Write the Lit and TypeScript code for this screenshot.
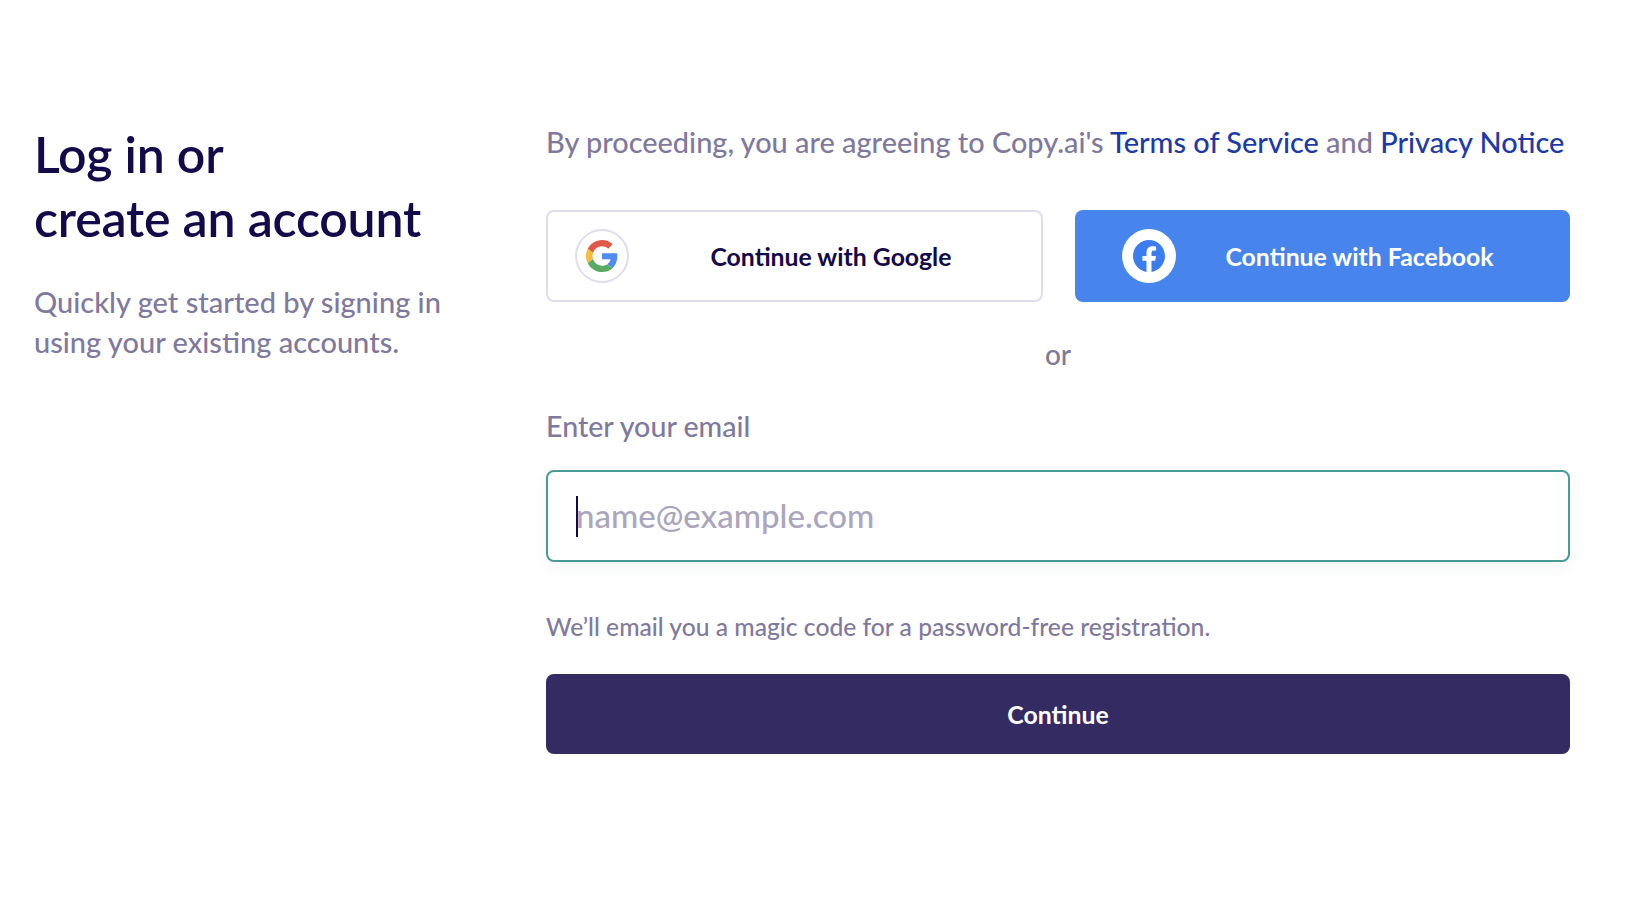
import { LitElement, html, css } from "lit";
import { customElement } from "lit/decorators.js";

@customElement("app-root")
export class AppRoot extends LitElement {
  static styles = css`
    :host {
      display: block;
      width: 1628px;
      height: 920px;
      background: #fff;
      font-family: "Lato", "Inter", sans-serif;
      color: #7f7a9d;
      box-sizing: border-box;
    }
    .page {
      display: grid;
      grid-template-columns: 546px 1024px;
      padding-top: 122px;
    }
    .left { padding-left: 34px; }
    h1 {
      margin: 0;
      font-size: 50px;
      line-height: 64px;
      font-weight: 600;
      letter-spacing: -0.2px;
      color: #130a4a;
    }
    .sub {
      margin: 32px 0 0;
      font-size: 29px;
      line-height: 40px;
      font-weight: 500;
    }
    .right { display: flex; flex-direction: column; }
    .terms {
      margin: 0;
      font-size: 28.9px;
      line-height: 40px;
      font-weight: 500;
      white-space: nowrap;
    }
    .terms a { color: #1e3aa8; text-decoration: none; }
    .socials {
      display: grid;
      grid-template-columns: 497px 495px;
      column-gap: 32px;
      margin-top: 48px;
    }
    .social {
      display: flex;
      align-items: center;
      height: 92px;
      box-sizing: border-box;
      border-radius: 8px;
      font-size: 24.8px;
      font-weight: 700;
    }
    .google { border: 2px solid #dedeeb; color: #130a4a; padding: 0 8px 0 27px; }
    .facebook { background: #4785ed; color: #fff; padding: 0 27px 0 47px; }
    .badge {
      flex: none;
      width: 54px;
      height: 54px;
      border-radius: 50%;
      box-sizing: border-box;
      display: flex;
      align-items: center;
      justify-content: center;
    }
    .google .badge { border: 2px solid #dedeeb; }
    .facebook .badge { background: #fff; }
    .social span { flex: 1; text-align: center; }
    .or {
      text-align: center;
      font-size: 28px;
      line-height: 40px;
      font-weight: 500;
      margin-top: 32px;
    }
    label {
      display: block;
      margin-top: 32px;
      font-size: 28.6px;
      line-height: 40px;
      font-weight: 500;
    }
    .field { position: relative; margin-top: 24px; }
    input {
      display: block;
      width: 100%;
      height: 92px;
      box-sizing: border-box;
      border: 2px solid #4a9b95;
      border-radius: 8px;
      padding: 0 28px 2px;
      font: 500 33px "Lato", "Inter", sans-serif;
      color: #130a4a;
      outline: none;
      background: #fff;
      box-shadow: 0 6px 16px rgba(70, 80, 130, 0.06);
    }
    input::placeholder { color: #aaa6bd; opacity: 1; }
    .caret {
      position: absolute;
      left: 30px;
      top: 26px;
      width: 2px;
      height: 41px;
      background: #130a4a;
    }
    .help {
      margin: 45px 0 0;
      font-size: 24.65px;
      line-height: 40px;
      font-weight: 500;
    }
    .continue {
      display: block;
      width: 100%;
      height: 80px;
      margin-top: 27px;
      border: 0;
      border-radius: 8px;
      background: #352b63;
      color: #fff;
      font: 700 24.8px "Lato", "Inter", sans-serif;
    }
  `;

  render() {
    return html`
      <div class="page">
        <div class="left">
          <h1>Log in or<br />create an account</h1>
          <p class="sub">Quickly get started by signing in<br />using your existing accounts.</p>
        </div>
        <div class="right">
          <p class="terms">By proceeding, you are agreeing to Copy.ai's <a>Terms of Service</a> and <a>Privacy Notice</a></p>
          <div class="socials">
            <div class="social google">
              <div class="badge">
                <svg width="32" height="32" viewBox="0 0 48 48">
                  <path fill="#E05A47" d="M24 9.5c3.5 0 6.7 1.2 9.2 3.6l6.8-6.8C35.9 2.4 30.5 0 24 0 14.6 0 6.5 5.4 2.6 13.2l8 6.2C12.4 13.7 17.700 9.500 24 9.500z"/>
                  <path fill="#4F8BF0" d="M47 24.500c0-1.600-.1-3.100-.4-4.500H24v9h12.900c-.6 3-2.300 5.500-4.800 7.200l7.700 6C44.300 38 47 31.800 47 24.500z"/>
                  <path fill="#F4BC42" d="M10.600 28.600c-.5-1.400-.8-3-.8-4.600s.3-3.200.8-4.600l-8-6.200C.9 16.500 0 20.100 0 24s.9 7.500 2.600 10.800l8-6.200z"/>
                  <path fill="#5BAA63" d="M24 48c6.500 0 11.900-2.100 15.800-5.800l-7.700-6c-2.100 1.400-4.900 2.300-8.100 2.300-6.300 0-11.600-4.200-13.400-9.900l-8 6.200C6.500 42.600 14.600 48 24 48z"/>
                </svg>
              </div>
              <span>Continue with Google</span>
            </div>
            <div class="social facebook">
              <div class="badge">
                <svg width="32" height="32" viewBox="0 0 24 24">
                  <path fill="#3b7dee" d="M24 12.070C24 5.400 18.630 0 12 0S0 5.400 0 12.070c0 6.030 4.390 11.020 10.130 11.930v-8.440H7.080v-3.490h3.050V9.410c0-3.030 1.790-4.700 4.530-4.700 1.310 0 2.680.240 2.680.240v2.970h-1.510c-1.490 0-1.960.930-1.960 1.890v2.260h3.330l-.53 3.490h-2.800V24C19.610 23.090 24 18.100 24 12.070z"/>
                </svg>
              </div>
              <span>Continue with Facebook</span>
            </div>
          </div>
          <div class="or">or</div>
          <label for="email">Enter your email</label>
          <div class="field">
            <input id="email" type="email" placeholder="name@example.com" />
            <div class="caret"></div>
          </div>
          <p class="help">We’ll email you a magic code for a password-free registration.</p>
          <button class="continue">Continue</button>
        </div>
      </div>
    `;
  }
}
